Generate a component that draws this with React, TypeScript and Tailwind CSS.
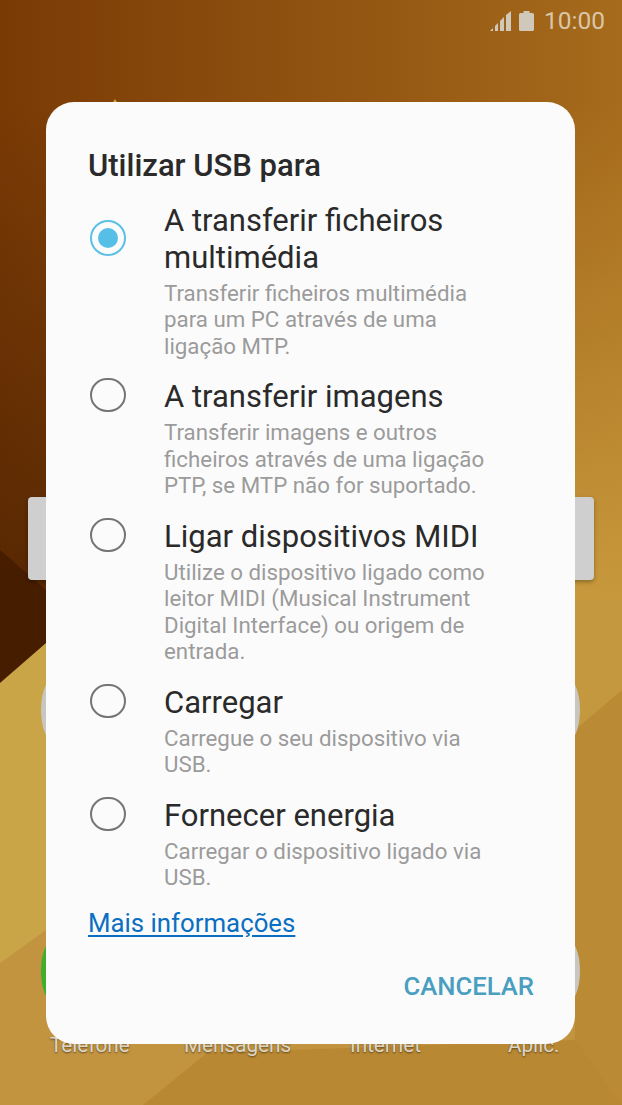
import React from "react";

const options = [
  {
    title: ["A transferir ficheiros", "multimédia"],
    lines: ["Transferir ficheiros multimédia", "para um PC através de uma", "ligação MTP."],
    selected: true,
  },
  {
    title: ["A transferir imagens"],
    lines: ["Transferir imagens e outros", "ficheiros através de uma ligação", "PTP, se MTP não for suportado."],
    selected: false,
  },
  {
    title: ["Ligar dispositivos MIDI"],
    lines: ["Utilize o dispositivo ligado como", "leitor MIDI (Musical Instrument", "Digital Interface) ou origem de", "entrada."],
    selected: false,
  },
  {
    title: ["Carregar"],
    lines: ["Carregue o seu dispositivo via", "USB."],
    selected: false,
  },
  {
    title: ["Fornecer energia"],
    lines: ["Carregar o dispositivo ligado via", "USB."],
    selected: false,
  },
];

const Wallpaper = () => (
  <svg className="absolute inset-0" width="622" height="1105" viewBox="0 0 622 1105">
    <defs>
      <linearGradient id="top" x1="0" y1="0" x2="1" y2="0">
        <stop offset="0" stopColor="#7a3a05" />
        <stop offset="1" stopColor="#a66b1c" />
      </linearGradient>
      <linearGradient id="left" x1="0" y1="0" x2="0" y2="1">
        <stop offset="0" stopColor="#3f1a00" stopOpacity="0" />
        <stop offset="1" stopColor="#3f1a00" stopOpacity="0.6" />
      </linearGradient>
      <linearGradient id="right" x1="0" y1="0" x2="0" y2="1">
        <stop offset="0" stopColor="#c8993c" stopOpacity="0" />
        <stop offset="1" stopColor="#c8993c" stopOpacity="1" />
      </linearGradient>
    </defs>
    <rect width="622" height="700" fill="url(#top)" />
    <rect y="102" width="46" height="500" fill="url(#left)" />
    <rect x="575" y="102" width="47" height="500" fill="url(#right)" />
    <rect x="575" y="600" width="47" height="130" fill="#c4983f" />
    <polygon points="113,102 115,99 117,102" fill="#c9a040" />
    <polygon points="0,550 46,590 46,700 0,700" fill="#471d00" />
    <polygon points="0,683 46,643 575,643 575,1105 0,1105" fill="#c9a548" />
    <polygon points="575,730 622,690 622,1105 575,1105" fill="#bb8a34" />
    <polygon points="0,963 46,930 575,930 575,1105 0,1105" fill="#c39440" />
    <polygon points="143,1105 207,1053 575,1040 622,1105" fill="#b98832" />
  </svg>
);

const HomeScreen = () => (
  <div className="absolute inset-0">
    <div className="absolute left-[28px] top-[497px] h-[83px] w-[566px] rounded-[4px] bg-[#cfcfcf] shadow-[0_2px_4px_rgba(0,0,0,0.3)]" />
    <div className="absolute left-[41px] top-[677px] h-[66px] w-[60px] rounded-[14px/33px] bg-[#c8c6c0]" />
    <div className="absolute left-[520px] top-[677px] h-[66px] w-[60px] rounded-[14px/33px] bg-[#c8c6c0]" />
    <div className="absolute left-[41px] top-[938px] h-[66px] w-[60px] rounded-[14px/33px] bg-[#3fae2a]" />
    <div className="absolute left-[520px] top-[938px] h-[66px] w-[60px] rounded-[14px/33px] bg-[#c8c6c0]" />
    <div className="text-[20.7px] leading-[26px] text-[#dcd6c8] [text-shadow:0_1px_2px_rgba(0,0,0,0.5)]">
      <span className="absolute left-[50px] top-[1032px]">Telefone</span>
      <span className="absolute left-[184px] top-[1032px]">Mensagens</span>
      <span className="absolute left-[350px] top-[1032px]">Internet</span>
      <span className="absolute left-[508px] top-[1032px]">Aplic.</span>
    </div>
  </div>
);

const StatusBar = () => (
  <div className="relative flex h-[42px] items-center justify-end pr-[17px] text-[#d0c8bb]">
    <svg width="21" height="20" viewBox="0 0 21 20" className="mr-[8px]" fill="currentColor">
      <polygon points="0,20 3,17 3,20" />
      <polygon points="5,20 5,15 8,12 8,20" />
      <polygon points="10,20 10,10 14,6 14,20" />
      <polygon points="16,20 16,4 21,0 21,20" />
    </svg>
    <svg width="15" height="20" viewBox="0 0 15 20" className="mr-[10px]" fill="currentColor">
      <path d="M4.5 0h6v2h3a1.5 1.5 0 0 1 1.5 1.5V18.5a1.5 1.5 0 0 1-1.5 1.5h-12A1.5 1.5 0 0 1 0 18.5V3.5A1.5 1.5 0 0 1 1.5 2h3z" />
    </svg>
    <span className="text-[24.5px] leading-none text-[#d9c6a8]">10:00</span>
  </div>
);

const Radio = ({ selected }: { selected: boolean }) =>
  selected ? (
    <div className="flex h-[36px] w-[36px] items-center justify-center rounded-full border-[2px] border-[#5bc0e6]">
      <div className="h-[20px] w-[20px] rounded-full bg-[#55bfe8]" />
    </div>
  ) : (
    <div className="h-[36px] w-[36px] rounded-full border-[2px] border-[#757575]" />
  );

export default function App() {
  return (
    <div className="relative h-[1105px] w-[622px] overflow-hidden font-['Roboto',sans-serif]">
      <Wallpaper />
      <HomeScreen />
      <StatusBar />
      <div className="relative mx-[46px] mt-[60px] flex h-[942px] w-[529px] flex-col rounded-[28px] bg-[#fbfbfb] pl-[42px] pr-[41px] pt-[46px]">
        <h1 className="text-[31px] leading-[36px] font-medium text-[#2a2a2a]">Utilizar USB para</h1>
        <div className="mt-[18px] flex flex-col gap-[19.2px]">
          {options.map((o) => (
            <div key={o.title[0]} className="flex">
              <div className="ml-[2px] w-[74px] shrink-0">
                <div className="flex flex-col justify-center pb-[3px]" style={{ height: o.title.length * 37 }}>
                  <Radio selected={o.selected} />
                </div>
              </div>
              <div>
                {o.title.map((t) => (
                  <div key={t} className="text-[31px] leading-[37px] text-[#2a2a2a]">
                    {t}
                  </div>
                ))}
                <div className="mt-[4px]">
                  {o.lines.map((l) => (
                    <div key={l} className="text-[22.3px] leading-[26.4px] text-[#9b9b9b]">
                      {l}
                    </div>
                  ))}
                </div>
              </div>
            </div>
          ))}
        </div>
        <a className="mt-[17px] text-[25.8px] leading-[32px] text-[#0a6fc2] underline underline-offset-[3px]">Mais informações</a>
        <div className="mt-[31px] flex justify-end">
          <span className="text-[25.7px] leading-[32px] font-medium text-[#4a9fc0]">CANCELAR</span>
        </div>
      </div>
    </div>
  );
}
